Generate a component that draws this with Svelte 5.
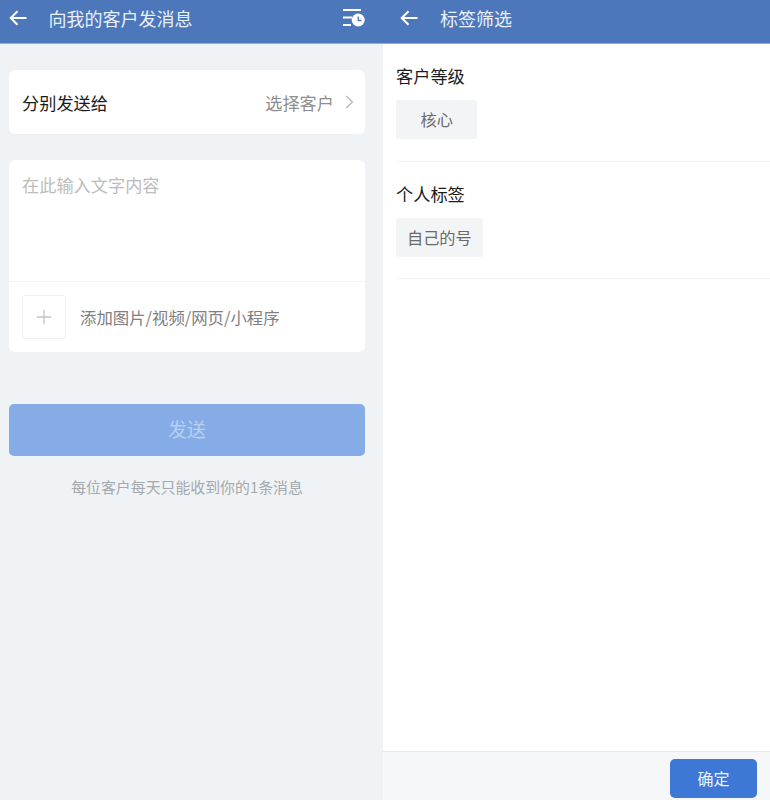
<script lang="ts">
  const groups = [
    { title: '客户等级', tag: '核心', wide: true },
    { title: '个人标签', tag: '自己的号', wide: false }
  ];
</script>

<div class="page">
  <section class="left">
    <header class="bar">
      <svg class="back" viewBox="0 0 18 16" fill="none" stroke="currentColor" stroke-width="2" aria-hidden="true">
        <path d="M17.500 8H2M8.500 1.200 1.700 8l6.800 6.800" />
      </svg>
      <span class="bar-title">向我的客户发消息</span>
      <svg class="history" viewBox="0 0 22 18" aria-hidden="true">
        <path d="M0 1h18M0 8.500h9M0 16h8" fill="none" stroke="#fff" stroke-width="2" />
        <circle cx="15.200" cy="11" r="6.500" fill="#fff" />
        <path d="M15.200 7.500v4h3.300" fill="none" stroke="#4c77bb" stroke-width="1.300" />
      </svg>
    </header>

    <div class="content">
      <div class="card pick">
        <span class="pick-label">分别发送给</span>
        <span class="pick-value">选择客户</span>
        <svg class="chevron" viewBox="0 0 9 14" fill="none" stroke="currentColor" stroke-width="1.300" aria-hidden="true">
          <path d="M1 1l6.500 6L1 13" />
        </svg>
      </div>

      <div class="card compose">
        <div class="placeholder">在此输入文字内容</div>
        <div class="attach">
          <div class="plus">
            <svg viewBox="0 0 16 16" fill="none" stroke="currentColor" stroke-width="1.300" aria-hidden="true">
              <path d="M8 1v14M1 8h14" />
            </svg>
          </div>
          <span>添加图片/视频/网页/小程序</span>
        </div>
      </div>

      <button class="send" type="button">发送</button>
      <p class="hint">每位客户每天只能收到你的1条消息</p>
    </div>
  </section>

  <section class="right">
    <header class="bar">
      <svg class="back" viewBox="0 0 18 16" fill="none" stroke="currentColor" stroke-width="2" aria-hidden="true">
        <path d="M17.500 8H2M8.500 1.200 1.700 8l6.800 6.800" />
      </svg>
      <span class="bar-title">标签筛选</span>
    </header>

    <div class="filters">
      {#each groups as group}
        <div class="group">
          <div class="group-title">{group.title}</div>
          <div class="tag" class:wide={group.wide}>{group.tag}</div>
        </div>
      {/each}
    </div>

    <footer class="foot">
      <button class="confirm" type="button">确定</button>
    </footer>
  </section>
</div>

<style>
  :global(body) {
    margin: 0;
    font-family: "Noto Sans CJK SC", "Noto Sans", sans-serif;
  }

  .page {
    display: flex;
    width: 770px;
    height: 800px;
    overflow: hidden;
  }

  .left {
    width: 383px;
    flex-shrink: 0;
    background: #f0f3f5;
    display: flex;
    flex-direction: column;
  }

  .right {
    flex: 1;
    background: #fff;
    display: flex;
    flex-direction: column;
  }

  .bar {
    flex-shrink: 0;
    background: #4c77bb;
    border-bottom: 1px solid #8aaede;
    display: flex;
    align-items: center;
    color: #fff;
    box-sizing: border-box;
    height: 44px;
    padding: 0 18px 8px 9px;
  }

  .back {
    width: 18px;
    height: 16px;
    flex-shrink: 0;
    margin-right: 21.500px;
  }

  .right .back {
    margin-left: 8px;
    margin-right: 22px;
  }

  .bar-title {
    flex: 1;
    font-size: 18px;
    color: #e9eff8;
  }

  .history {
    width: 22px;
    height: 18px;
    flex-shrink: 0;
  }

  .content {
    display: flex;
    flex-direction: column;
    padding: 26px 18px 0 9px;
  }

  .card {
    background: #fff;
    border-radius: 6px;
  }

  .pick {
    height: 64px;
    display: flex;
    align-items: center;
    padding: 0 11px 0 13px;
  }

  .pick-label {
    flex: 1;
    font-size: 17.200px;
    color: #1c1c1c;
  }

  .pick-value {
    font-size: 17.200px;
    color: #8f8f8f;
  }

  .chevron {
    width: 9px;
    height: 14px;
    margin-left: 11px;
    color: #b5b5b5;
  }

  .compose {
    margin-top: 26px;
    height: 192px;
    display: flex;
    flex-direction: column;
  }

  .placeholder {
    height: 122px;
    box-sizing: border-box;
    padding: 13px 13px 0;
    font-size: 17.200px;
    line-height: 24px;
    color: #bcbcbc;
    border-bottom: 1px solid #f5f6f7;
  }

  .attach {
    flex: 1;
    display: flex;
    align-items: center;
    padding: 0 13px;
    gap: 14px;
    font-size: 16.400px;
    color: #808080;
  }

  .plus {
    width: 44px;
    height: 44px;
    box-sizing: border-box;
    border: 1px solid #f0f1f2;
    border-radius: 3px;
    display: flex;
    align-items: center;
    justify-content: center;
    color: #c4c4c4;
  }

  .plus svg {
    width: 16px;
    height: 16px;
  }

  .send {
    margin-top: 52px;
    height: 52px;
    border: none;
    border-radius: 5px;
    background: #85ace7;
    color: #b9d0f1;
    font: inherit;
    font-size: 19px;
    line-height: 48px;
    padding: 0 0 3px;
  }

  .hint {
    margin: 20px 0 0;
    text-align: center;
    font-size: 14.900px;
    color: #a4a9ad;
  }

  .filters {
    flex: 1;
    padding-left: 13px;
  }

  .group {
    height: 117.500px;
    box-sizing: border-box;
    border-bottom: 1px solid #f3f4f5;
    padding-top: 19px;
  }

  .group-title {
    font-size: 17.200px;
    line-height: 25px;
    color: #1c1c1c;
  }

  .tag {
    display: table;
    margin-top: 12px;
    height: 39px;
    line-height: 38px;
    padding: 0 11px;
    background: #f3f4f6;
    border-radius: 3px;
    font-size: 16.200px;
    color: #6b6b6b;
  }

  .tag.wide {
    padding: 0 24.500px;
  }

  .foot {
    height: 49px;
    box-sizing: border-box;
    flex-shrink: 0;
    background: #f6f7f9;
    border-top: 1px solid #e9eaeb;
    display: flex;
    align-items: flex-end;
    justify-content: flex-end;
    padding: 0 13px 2px 0;
  }

  .confirm {
    width: 87px;
    height: 39px;
    border: none;
    border-radius: 5px;
    background: #3d78d6;
    color: #eef3fb;
    font: inherit;
    font-size: 16px;
    padding: 0 0 2px;
  }
</style>
